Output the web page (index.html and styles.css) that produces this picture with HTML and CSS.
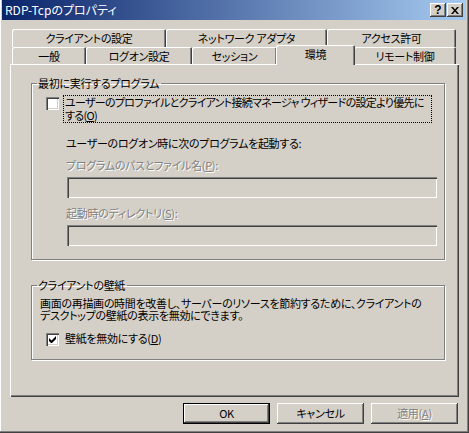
FILE: index.html
```html
<!DOCTYPE html>
<html>

<head>
    <meta charset="utf-8">
    <title>RDP-Tcpのプロパティ</title>
    <link rel="stylesheet" href="styles.css">
</head>

<body>
    <div class="window">
        <!-- 타이틀바 -->
        <div class="titlebar">
            <span class="title">RDP-Tcpのプロパティ</span>
            <div class="cap-btns">
                <span class="cap-btn help">?</span>
                <span class="cap-btn close">
                    <svg width="8" height="7" viewBox="0 0 8 7">
                        <path d="M0 0h2l2 2.5 2-2.5h2L5 3.5 8 7H6L4 4.5 2 7H0l3-3.5z" fill="#000"/>
                    </svg>
                </span>
            </div>
        </div>

        <!-- 탭 -->
        <div class="tabs">
            <div class="tabrow back">
                <div class="tab w1">クライアントの設定</div>
                <div class="tab w2">ネットワーク アダプタ</div>
                <div class="tab w3">アクセス許可</div>
            </div>
            <div class="tabrow front">
                <div class="tab w4">一般</div>
                <div class="tab w5">ログオン設定</div>
                <div class="tab w6">セッション</div>
                <div class="tab w7 active">環境</div>
                <div class="tab w8">リモート制御</div>
            </div>
        </div>

        <!-- 패널 -->
        <div class="panel">
            <fieldset class="group g1">
                <legend>最初に実行するプログラム</legend>
                <div class="chk-row first">
                    <span class="chk"></span>
                    <span class="chk-label focus">ユーザーのプロファイルとクライアント接続マネージャ ウィザードの設定より優先に<br>する(<u>O</u>)</span>
                </div>
                <p class="note">ユーザーのログオン時に次のプログラムを起動する:</p>
                <p class="field-label disabled">プログラムのパスとファイル名(<u>P</u>):</p>
                <div class="textbox"></div>
                <p class="field-label disabled">起動時のディレクトリ(<u>S</u>):</p>
                <div class="textbox"></div>
            </fieldset>

            <fieldset class="group g2">
                <legend>クライアントの壁紙</legend>
                <p class="desc">画面の再描画の時間を改善し、サーバーのリソースを節約するために、クライアントの<br>デスクトップの壁紙の表示を無効にできます。</p>
                <div class="chk-row">
                    <span class="chk">
                        <svg width="7" height="7" viewBox="0 0 7 7">
                            <path d="M0 2v3l2 2h1l4-4V0L2.5 4.5z" fill="#000"/>
                        </svg>
                    </span>
                    <span class="chk-label">壁紙を無効にする(<u>D</u>)</span>
                </div>
            </fieldset>
        </div>

        <!-- 버튼 -->
        <div class="buttons">
            <div class="btn default">OK</div>
            <div class="btn">キャンセル</div>
            <div class="btn disabled">適用(<u>A</u>)</div>
        </div>
    </div>
</body>

</html>
```

FILE: styles.css
```css
/* 기본 */
body {
    margin: 0;
    background: #d4d0c8;
    font-family: "Noto Sans CJK JP", sans-serif;
    font-size: 11px;
    letter-spacing: -0.3px;
    font-feature-settings: "palt";
    color: #000;
}
p {
    margin: 0;
    white-space: nowrap;
}

/* 창 */
.window {
    width: 469px;
    height: 433px;
    box-sizing: border-box;
    padding: 0 3px 0 2px;
    background: #d4d0c8;
    box-shadow:
        inset -1px -1px #404040,
        inset -2px -2px #808080,
        inset 1px 0 #fff;
}

/* 타이틀바 */
.titlebar {
    height: 20px;
    display: flex;
    align-items: center;
    justify-content: space-between;
    padding: 0 3px 0 3px;
    background: linear-gradient(to right, #0a246a, #a6caf0);
    color: #fff;
}
.title {
    font-size: 12px;
    letter-spacing: 0;
    line-height: 20px;
}
.cap-btns {
    display: flex;
    gap: 1px;
}
.cap-btn {
    width: 16px;
    height: 14px;
    display: flex;
    align-items: center;
    justify-content: center;
    background: #d4d0c8;
    color: #000;
    box-shadow:
        inset -1px -1px #404040,
        inset 1px 1px #fff,
        inset -2px -2px #808080;
}
.help {
    font-family: "Liberation Sans", sans-serif;
    font-weight: bold;
    font-size: 12px;
    letter-spacing: 0;
    line-height: 14px;
}

/* 탭 */
.tabs {
    margin: 9px 0 0 10px;
    width: 444px;
}
.tabrow {
    display: flex;
}
.back {
    height: 18px;
}
.front {
    height: 17px;
}
.tab {
    flex: none;
    box-sizing: border-box;
    height: 100%;
    display: flex;
    align-items: center;
    justify-content: center;
    white-space: nowrap;
    border-radius: 2px 2px 0 0;
    box-shadow:
        inset 1px 1px #fff,
        inset -1px 0 #404040,
        inset -2px 0 #808080;
}
.w1 { width: 154px; }
.w2 { width: 161px; }
.w3 { width: 129px; }
.w4 { width: 74px; }
.w5 { width: 106px; }
.w6 { width: 85px; }
.w7 { width: 77px; }
.w8 { width: 102px; }

/* 선택된 탭 - 패널 위로 겹침 */
.tab.active {
    position: relative;
    z-index: 2;
    width: 79px;
    height: 20px;
    margin: -2px -1px 0;
    padding-bottom: 3px;
    background: #d4d0c8;
}

/* 패널 */
.panel {
    width: 449px;
    height: 333px;
    box-sizing: border-box;
    margin-left: 8px;
    padding: 12px 0 0 21px;
    box-shadow:
        inset 1px 1px #fff,
        inset -1px -1px #404040,
        inset -2px -2px #808080;
}

/* 그룹박스 */
.group {
    width: 414px;
    box-sizing: border-box;
    margin: 0;
    padding: 0 0 13px 5px;
    border: 1px solid #808080;
    box-shadow: inset 1px 1px #fff, 1px 1px #fff;
}
.group legend {
    padding: 0 2px 0 1px;
    line-height: 14px;
}
.g2 {
    margin-top: 18px;
}

/* 체크박스 */
.chk-row {
    display: flex;
    align-items: flex-start;
    margin-left: 9px;
}
.chk-row.first {
    margin-top: 5px;
}
.chk {
    width: 13px;
    height: 13px;
    flex: none;
    display: flex;
    align-items: center;
    justify-content: center;
    background: #fff;
    margin-top: 2px;
    box-shadow:
        inset 1px 1px #808080,
        inset 2px 2px #404040,
        inset -1px -1px #fff,
        inset -2px -2px #d4d0c8;
}
.chk-label {
    margin-left: 4px;
    line-height: 13px;
    padding: 0 1px;
    white-space: nowrap;
    border: 1px solid transparent;
}
.chk-label.focus {
    width: 365px;
    letter-spacing: -0.7px;
    border: 1px dotted #000;
}

/* 텍스트 */
.note {
    margin: 13px 0 0 29px;
    line-height: 14px;
}
.field-label {
    margin: 8px 0 0 29px;
    line-height: 14px;
}
.disabled {
    color: #808080;
    text-shadow: 1px 1px #fff;
}
.textbox {
    width: 370px;
    height: 21px;
    box-sizing: border-box;
    margin: 5px 0 0 30px;
    box-shadow:
        inset 1px 1px #808080,
        inset 2px 2px #404040,
        inset -1px -1px #fff,
        inset -2px -2px #d4d0c8;
}
.desc {
    margin: 5px 0 10px 3px;
    line-height: 12px;
}

/* 하단 버튼 */
.buttons {
    display: flex;
    gap: 7px;
    margin: 6px 0 0 181px;
}
.btn {
    width: 87px;
    height: 21px;
    box-sizing: border-box;
    text-align: center;
    line-height: 21px;
    box-shadow:
        inset -1px -1px #404040,
        inset 1px 1px #fff,
        inset -2px -2px #808080;
}
.btn.default {
    box-shadow:
        inset 0 0 0 1px #000,
        inset -2px -2px #404040,
        inset 2px 2px #fff,
        inset -3px -3px #808080;
}
```
